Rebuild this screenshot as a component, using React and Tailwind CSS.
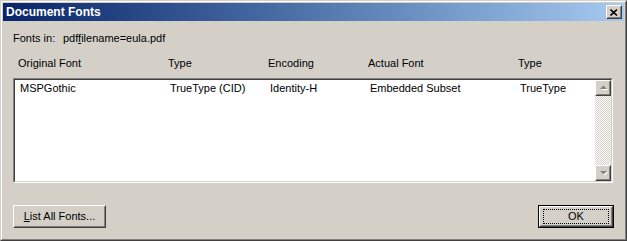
import React from "react";

function Raised({ className = "", children }) {
  return (
    <div className={"border border-t-white border-l-white border-r-[#404040] border-b-[#404040] bg-[#d4d0c8] " + className}>
      <div className="w-full h-full border border-t-[#d4d0c8] border-l-[#d4d0c8] border-r-[#808080] border-b-[#808080] flex items-center justify-center">
        {children}
      </div>
    </div>
  );
}

function Arrow({ down }) {
  return (
    <svg width="9" height="6" viewBox="0 0 9 6" className="block">
      {down ? (
        <>
          <polygon points="2,2 9,2 5.5,5.5" fill="#ffffff" />
          <polygon points="1,1 8,1 4.5,4.5" fill="#808080" />
        </>
      ) : (
        <>
          <polygon points="5.5,1.5 9,5 2,5" fill="#ffffff" />
          <polygon points="4.5,0.5 8,4 1,4" fill="#808080" />
        </>
      )}
    </svg>
  );
}

export default function App() {
  const font = "font-['Liberation_Sans',Arial,sans-serif] text-[11px] leading-[13px] text-black";
  return (
    <div className={"w-[627px] h-[241px] bg-[#d4d0c8] border border-t-[#d4d0c8] border-l-[#d4d0c8] border-r-[#404040] border-b-[#404040] " + font}>
      <div className="w-full h-full border border-t-white border-l-white border-r-[#808080] border-b-[#808080] p-px flex flex-col">
        {/* Title bar */}
        <div className="h-[18px] shrink-0 bg-gradient-to-r from-[#0a246a] to-[#a6caf0] flex items-center pl-[3px] pr-[2px]">
          <span className="text-white font-bold text-[12px] leading-[14px] flex-1">Document Fonts</span>
          <Raised className="w-[16px] h-[14px]">
            <svg width="8" height="7" viewBox="0 0 8 7" className="block">
              <path d="M0.5 0.5 L7 6.5 M7 0.5 L0.5 6.5" stroke="#000" strokeWidth="1.6" />
            </svg>
          </Raised>
        </div>

        {/* Content */}
        <div className="flex-1 flex flex-col pl-[10px] pr-[11px]">
          <div className="mt-[11px] flex h-[13px]">
            <span className="w-[50px]">Fonts in:</span>
            <span>
              pdf<u>f</u>ilename=eula.pdf
            </span>
          </div>

          <div className="mt-[12px] flex h-[13px] pl-[5px]">
            <span className="w-[150px]">Original Font</span>
            <span className="w-[100px]">Type</span>
            <span className="w-[100px]">Encoding</span>
            <span className="w-[150px]">Actual Font</span>
            <span>Type</span>
          </div>

          {/* List box */}
          <div className="mt-[8px] h-[105px] border border-t-[#808080] border-l-[#808080] border-r-white border-b-white">
            <div className="w-full h-full border border-t-[#404040] border-l-[#404040] border-r-[#d4d0c8] border-b-[#d4d0c8] bg-white flex">
              <div className="flex-1 pt-[2px] pl-[5px]">
                <div className="flex h-[13px]">
                  <span className="w-[150px]">MSPGothic</span>
                  <span className="w-[100px]">TrueType (CID)</span>
                  <span className="w-[100px]">Identity-H</span>
                  <span className="w-[150px]">Embedded Subset</span>
                  <span>TrueType</span>
                </div>
              </div>
              <div className="w-[16px] flex flex-col bg-[repeating-conic-gradient(#d4d0c8_0_25%,#ffffff_0_50%)] bg-[length:2px_2px]">
                <Raised className="w-[16px] h-[16px] shrink-0">
                  <Arrow />
                </Raised>
                <div className="flex-1" />
                <Raised className="w-[16px] h-[16px] shrink-0">
                  <Arrow down />
                </Raised>
              </div>
            </div>
          </div>

          {/* Buttons */}
          <div className="mt-[22px] flex justify-between">
            <Raised className="w-[93px] h-[23px]">
              <span>
                <u>L</u>ist All Fonts...
              </span>
            </Raised>
            <div className="w-[76px] h-[23px] border border-black mr-[-1px]">
              <Raised className="w-full h-full">
                <div className="w-[66px] h-[15px] border border-dotted border-black flex items-center justify-center">
                  OK
                </div>
              </Raised>
            </div>
          </div>
        </div>
      </div>
    </div>
  );
}
